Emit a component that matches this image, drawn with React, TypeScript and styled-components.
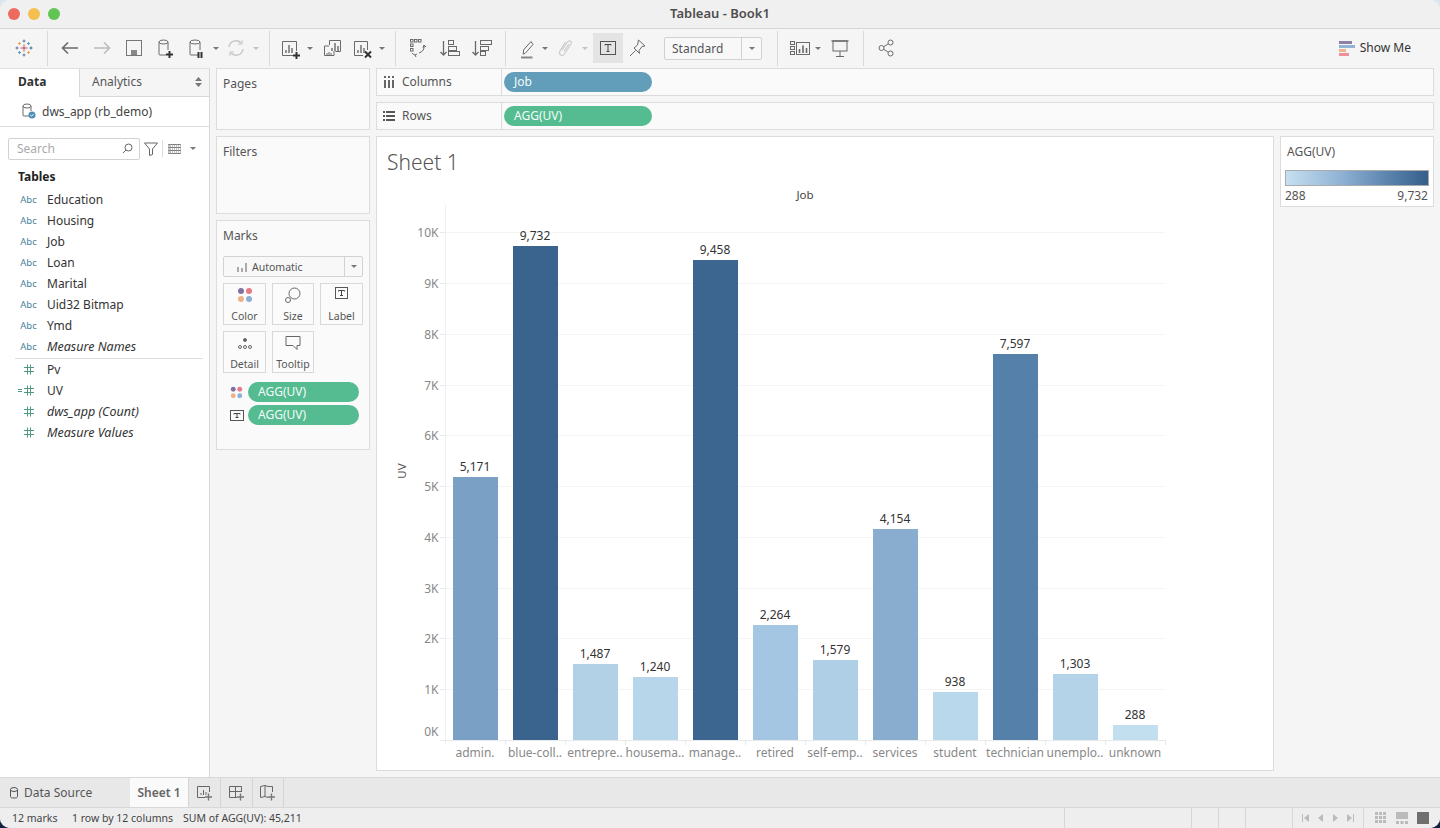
import React from 'react';
import styled, { createGlobalStyle } from 'styled-components';

const FONT = `"Noto Sans", "Open Sans", "Liberation Sans", sans-serif`;

const Global = createGlobalStyle`
  html, body { margin: 0; padding: 0; width: 1440px; height: 828px; overflow: hidden;
    background: linear-gradient(#dbe6ef 0 50%, #13233f 50% 100%); }
  * { box-sizing: border-box; }
`;

const Win = styled.div`
  width: 1440px; height: 828px; border-radius: 10px; overflow: hidden; background: #f5f5f5;
  display: grid; grid-template-rows: 29px 39px 1fr 31px 20px; font-family: ${FONT}; color: #444;
`;
const TitleBar = styled.div`
  position: relative; display: flex; align-items: center; justify-content: center; padding-bottom: 2px;
  background: #f0f0f0; border-bottom: 1px solid #d6d6d6; font-size: 13px; font-weight: 600; color: #4e4e4e;
`;
const Lights = styled.div`
  position: absolute; left: 8px; top: 8px; display: flex; gap: 8px;
`;
const Light = styled.span<{ $c: string }>`
  width: 12px; height: 12px; border-radius: 50%; background: ${p => p.$c};
`;
const Toolbar = styled.div`
  display: flex; align-items: center; background: #f5f5f5; padding: 0 29px 1px 0;
`;
const Slot = styled.div<{ $w: number; $active?: boolean }>`
  width: ${p => p.$w}px; height: 30px; flex: none; display: flex; align-items: center; justify-content: center;
  background: ${p => (p.$active ? '#e4e4e4' : 'transparent')};
`;
const Sep = styled.div`
  width: 1px; height: 35px; background: #d9d9d9; flex: none;
`;
const Caret = styled.span<{ $light?: boolean }>`
  width: 0; height: 0; border-left: 3px solid transparent; border-right: 3px solid transparent;
  border-top: 3px solid ${p => (p.$light ? '#c4c4c4' : '#777')};
`;
const Fit = styled.div<{ $w: number }>`
  width: ${p => p.$w}px; flex: none;
`;
const ViewSelect = styled.div`
  width: 98px; height: 23px; flex: none; display: grid; grid-template-columns: 1fr 20px; align-items: center;
  border: 1px solid #d2d2d2; border-radius: 2px; background: #f8f8f8; font-size: 12px; line-height: 19px; color: #555;
  padding-left: 7px;
`;
const SelectArrow = styled.div`
  height: 100%; border-left: 1px solid #d2d2d2; display: flex; align-items: center; justify-content: center;
`;
const ShowMe = styled.div`
  margin-left: auto; display: flex; align-items: center; gap: 5px; font-size: 12px; line-height: 14px; color: #333;
  padding-bottom: 1px;
`;
const Main = styled.div`
  display: grid; grid-template-columns: 210px 154px 1fr; column-gap: 6px; padding-right: 6px; min-height: 0;
`;
const DataPane = styled.div`
  background: #fff; border-right: 1px solid #d8d8d8; border-top: 1px solid #e0e0e0; display: flex; flex-direction: column;
`;
const Tabs = styled.div`
  height: 28px; display: grid; grid-template-columns: 79px 1fr; flex: none; font-size: 12px;
`;
const DataTab = styled.div`
  padding: 4px 0 0 18px; font-weight: 700; color: #333; background: #fff;
`;
const AnalyticsTab = styled.div`
  padding: 4px 7px 0 12px; display: flex; justify-content: space-between; align-items: flex-start; background: #f5f5f5;
  border-left: 1px solid #d8d8d8; border-bottom: 1px solid #d8d8d8; color: #555;
`;
const Source = styled.div`
  height: 30px; flex: none; display: flex; align-items: center; gap: 5px; padding: 0 0 1px 21px;
  font-size: 12px; color: #444; border-bottom: 1px solid #dedede;
`;
const SearchRow = styled.div`
  flex: none; height: 38px; padding: 5px 0 0 8px; display: flex; align-items: center;
`;
const SearchBox = styled.div`
  width: 132px; height: 22px; border: 1px solid #d2d2d2; border-radius: 2px; padding: 0 6px 0 8px;
  display: flex; align-items: center; justify-content: space-between; font-size: 12px; color: #aaa;
`;
const SmallSep = styled.div`
  width: 1px; height: 17px; background: #ddd; margin: 0 5px 0 4px;
`;
const TablesTitle = styled.div`
  font-size: 12px; font-weight: 700; color: #222; padding-left: 18px; height: 22px; line-height: 20px; margin-top: 2px;
`;
const FieldRow = styled.div<{ $italic?: boolean }>`
  height: 21px; display: grid; grid-template-columns: 47px 1fr; align-items: center;
  font-size: ${p => (p.$italic ? '12.5px' : '12px')};
  color: #333; font-style: ${p => (p.$italic ? 'italic' : 'normal')};
`;
const TypeAbc = styled.span`
  justify-self: center; font-size: 9.5px; color: #4a7f9b; font-style: normal; padding-left: 10px;
`;
const TypeNum = styled.span`
  justify-self: center; padding-left: 7px; display: flex;
`;
const FieldDivider = styled.div`
  height: 1px; background: #dedede; margin: 1px 6px 0 15px;
`;
const ShelfCol = styled.div`
  display: flex; flex-direction: column; gap: 6px;
`;
const Card = styled.div<{ $h: number }>`
  height: ${p => p.$h}px; flex: none; background: #fafafa; border: 1px solid #dcdcdc; padding: 6px 6px; font-size: 12px; color: #555;
`;
const MarkSelect = styled.div`
  margin-top: 12px; height: 21px; display: grid; grid-template-columns: 1fr 18px; align-items: center;
  border: 1px solid #d2d2d2; border-radius: 2px; background: #f8f8f8; font-size: 10.5px; color: #555;
`;
const MarkSelectLabel = styled.div`
  display: flex; align-items: center; gap: 4px; padding-left: 12px;
`;
const MarkGrid = styled.div`
  margin-top: 6px; display: grid; grid-template-columns: 43px 42px 43px; gap: 6px;
`;
const MarkBtn = styled.div`
  height: 42px; border: 1px solid #d8d8d8; background: #fbfbfb; display: flex; flex-direction: column;
  align-items: center; justify-content: space-between; padding: 3px 0 1px; font-size: 10.5px; color: #555; line-height: 14px;
`;
const MarkPills = styled.div`
  margin-top: 9px; display: flex; flex-direction: column; gap: 3px;
`;
const MarkPillRow = styled.div`
  display: grid; grid-template-columns: 25px 111px; align-items: center;
`;
const PillIcon = styled.div`
  padding-left: 7px; display: flex; align-items: center;
`;
const Pill = styled.div<{ $c: string; $w: number }>`
  width: ${p => p.$w}px; height: 20px; border-radius: 10px; background: ${p => p.$c}; color: #f4fbf8;
  font-size: 12px; line-height: 20px; padding-left: 10px;
`;
const RightCol = styled.div`
  display: flex; flex-direction: column; min-height: 0; gap: 6px; padding-bottom: 6px;
`;
const Shelf = styled.div`
  height: 28px; flex: none; display: grid; grid-template-columns: 125px 1fr; background: #fafafa; border: 1px solid #dcdcdc;
`;
const ShelfLabel = styled.div`
  display: flex; align-items: center; gap: 7px; padding: 0 0 1px 6px; font-size: 12px; color: #555; border-right: 1px solid #dcdcdc;
`;
const ShelfPills = styled.div`
  padding: 3px 0 0 2px;
`;
const ViewRow = styled.div`
  flex: 1; min-height: 0; display: grid; grid-template-columns: 898px 154px; column-gap: 6px; align-items: start;
`;
const Sheet = styled.div`
  height: 635px; background: #fff; border: 1px solid #dcdcdc;
`;
const SheetTitle = styled.div`
  height: 43px; padding: 11px 0 0 10px; font-size: 21px; line-height: 28px; font-weight: 300; color: #555;
`;
const ChartSvg = styled.svg`
  display: block; font-family: ${FONT};
`;
const Legend = styled.div`
  height: 71px; background: #fff; border: 1px solid #dcdcdc; padding: 6px 4px 0; font-size: 12px; color: #555;
`;
const LegendTitle = styled.div`
  padding-left: 2px; line-height: 17px;
`;
const Ramp = styled.div`
  margin-top: 10px; height: 16px; border: 1px solid #aaa;
  background: linear-gradient(90deg, #c6e0f1, #8db0d3 40%, #5a83ad 72%, #355e8a);
`;
const RampLabels = styled.div`
  display: flex; justify-content: space-between; padding: 1px 1px 0 0; line-height: 18px;
`;
const TabBar = styled.div`
  display: flex; background: #e8e8e8; border-top: 1px solid #d8d8d8; border-bottom: 1px solid #d8d8d8; font-size: 12px;
`;
const SourceTab = styled.div`
  width: 130px; display: flex; align-items: center; gap: 5px; padding-left: 9px; color: #555;
`;
const SheetTab = styled.div`
  width: 58px; background: #fafafa; display: flex; align-items: center; justify-content: center; font-weight: 600; color: #666;
`;
const AddTab = styled.div<{ $w: number }>`
  width: ${p => p.$w}px; display: flex; align-items: center; justify-content: center; border-left: 1px solid #d4d4d4;
  &:last-child { border-right: 1px solid #d4d4d4; }
`;
const Status = styled.div`
  display: flex; align-items: center; background: #eeeeee; font-size: 10.5px; color: #444;
`;
const StatusText = styled.span<{ $w: number }>`
  width: ${p => p.$w}px; flex: none; white-space: nowrap; padding-bottom: 1px;
`;
const StatusCell = styled.div<{ $w: number; $first?: boolean }>`
  width: ${p => p.$w}px; flex: none; height: 100%; border-left: 1px solid #d6d6d6; display: flex; align-items: center;
  justify-content: ${p => (p.$first ? 'flex-start' : 'space-around')}; padding: 0 6px;
`;

const GRAY = '#6a6a6a';
const Ico = ({ s = 24, h, children }: { s?: number; h?: number; children: React.ReactNode }) => (
  <svg width={s} height={h ?? s} viewBox={`0 0 ${s} ${h ?? s}`} fill="none" stroke={GRAY} strokeWidth={1} style={{ display: 'block', flex: 'none' }}>
    {children}
  </svg>
);
const Cyl = ({ x, y, w, h, c = GRAY }: { x: number; y: number; w: number; h: number; c?: string }) => (
  <g stroke={c} fill="none">
    <ellipse cx={x + w / 2} cy={y + 2} rx={w / 2} ry={2} />
    <path d={`M${x} ${y + 2}V${y + h - 1}q0 1 1 1h${w - 3}M${x + w} ${y + 2}v${h - 7}`} />
  </g>
);
const Plus = ({ x, y }: { x: number; y: number }) => (
  <path d={`M${x} ${y + 3.5}h7M${x + 3.5} ${y}v7`} stroke="#333" strokeWidth={2} />
);
const Logo = () => (
  <Ico>
    <g strokeWidth={1}>
      <path d="M12 8.500v7M8.500 12h7" stroke="#c8495b" />
      <path d="M12 3.500v3M10.500 5h3M12 17.500v3M10.500 19h3" stroke="#5a7fa8" />
      <path d="M3.500 12h3M5 10.500v3" stroke="#6f6fa0" />
      <path d="M17.500 12h3M19 10.500v3" stroke="#3f6f8f" />
      <path d="M7.500 6v3M6 7.500h3" stroke="#eea24f" />
      <path d="M16.500 6v3M15 7.500h3" stroke="#5a9bb5" />
      <path d="M7.500 15v3M6 16.500h3" stroke="#5a9bb5" />
      <path d="M16.500 15v3M15 16.500h3" stroke="#eea24f" />
    </g>
  </Ico>
);
const Back = () => <Ico><path d="M20 12H4.500M10 6.500L4.500 12l5.500 5.500" strokeWidth={1.6} /></Ico>;
const Forward = () => <Ico><path d="M4 12h15.500M14 6.500l5.500 5.500-5.500 5.500" strokeWidth={1.6} stroke="#bbb" /></Ico>;
const Save = () => <Ico><rect x={4.500} y={4.500} width={15} height={15} stroke="#777" /><rect x={9} y={14} width={6} height={5} fill="#888" stroke="none" /></Ico>;
const NewDs = () => <Ico><Cyl x={5} y={4} w={9} h={15} /><Plus x={12} y={15} /></Ico>;
const PauseDs = () => <Ico><Cyl x={6} y={4} w={10} h={15} /><path d="M14.500 16v6M17.500 16v6" stroke="#333" strokeWidth={2} /></Ico>;
const Refresh = () => <Ico><path d="M5 11a7 7 0 0 1 12-4M19 13a7 7 0 0 1-12 4" stroke="#c4c4c4" strokeWidth={1.4} /><path d="M18 4v4h-4M6 20v-4h4" stroke="#c4c4c4" /></Ico>;
const Bars = ({ x, y }: { x: number; y: number }) => <path d={`M${x} ${y + 5}v3M${x + 3} ${y}v8M${x + 6} ${y + 3}v5`} strokeWidth={1.4} />;
const NewSheet = () => <Ico><path d="M14 19.500H3.500v-14h14V15" /><Bars x={7} y={9} /><Plus x={14} y={16} /></Ico>;
const DupSheet = () => <Ico><path d="M9.500 9V4.500h11v11h-5" /><Bars x={12} y={7} /><path d="M9 10H4.500v9.500H14V15" /><path d="M7 17v2M9 16v3M11 17v2" /></Ico>;
const ClearSheet = () => <Ico><path d="M13 19.500H4.500v-14h13V14" /><Bars x={8} y={9} /><path d="M15 15.500l6 6M21 15.500l-6 6" stroke="#333" strokeWidth={2} /></Ico>;
const Swap = () => <Ico>
  <g fill="none"><rect x={5.500} y={3.500} width={2.500} height={2.500} /><rect x={9.500} y={3.500} width={2.500} height={2.500} /><rect x={13.500} y={3.500} width={2.500} height={2.500} /><rect x={5.500} y={8} width={2.500} height={2.500} /><rect x={5.500} y={12.500} width={2.500} height={2.500} /></g>
  <path d="M19 9q1 6-5 8M10 19q-2-.5-3-2M12 18l-2 1 1 2M18 12l1-3 2 2" /></Ico>;
const SortAsc = () => <Ico><path d="M5.500 5v14M2.500 16l3 3 3-3" strokeWidth={1.3} /><rect x={10.500} y={4.500} width={5} height={4} /><rect x={10.500} y={10.500} width={8} height={4} /><rect x={10.500} y={15.500} width={11} height={4} /></Ico>;
const SortDesc = () => <Ico><path d="M5.500 5v14M2.500 16l3 3 3-3" strokeWidth={1.3} /><rect x={10.500} y={4.500} width={11} height={4} /><rect x={10.500} y={10.500} width={8} height={4} /><rect x={10.500} y={15.500} width={5} height={4} /></Ico>;
const Highlight = () => <Ico><path d="M7.500 16l-.5 2 2-.5L17 8.500l-2-3L7.500 14z" /><path d="M5 21.500h11.500" stroke="#888" strokeWidth={2} /></Ico>;
const Clip = () => <Ico><path d="M8 14l5.500-8c1.500-2.500 5-.5 3.500 2l-6.500 10c-2 3-6.500.5-4.500-3L11.500 6M10 15.500l5-7.500" stroke="#ccc" strokeWidth={1.2} /></Ico>;
const TBox = ({ w = 16, h = 14 }: { w?: number; h?: number }) => (
  <svg width={w} height={h} viewBox={`0 0 ${w} ${h}`} style={{ display: 'block', flex: 'none' }} fill="none">
    <rect x={.5} y={.5} width={w - 1} height={h - 1} stroke="#555" />
    <path d={`M${w / 2 - 3} 4.500V3.500h6V4.500M${w / 2} 3.500V${h - 3.5}M${w / 2 - 1.5} ${h - 3.5}h3`} stroke="#444" />
  </svg>
);
const Pin = () => <Ico><path d="M13.500 4l6.500 6-3 .5-3 4 .5 3L9 12l3.500-3zM10.500 14.500L5 20" /></Ico>;
const Cards = () => <Ico>
  <rect x={2.500} y={5.500} width={4} height={3} /><rect x={2.500} y={10.500} width={4} height={3} /><rect x={2.500} y={15.500} width={4} height={3} />
  <rect x={8.500} y={6.500} width={13} height={12} /><path d="M11.500 13v4M15 9.500V17M18.500 12v5" strokeWidth={1.6} /></Ico>;
const Present = () => <Ico><path d="M3.500 5h17" strokeWidth={1.4} /><rect x={5} y={5} width={14} height={10} /><path d="M12 15v5M8 20.500h8" /></Ico>;
const Share = () => <Ico><circle cx={16.500} cy={6.500} r={2.500} /><circle cx={7.500} cy={12} r={2.500} /><circle cx={16.500} cy={17.500} r={2.500} /><path d="M9.700 10.700L14.300 7.800M9.700 13.300l4.600 2.900" /></Ico>;
const ShowMeIco = () => (
  <svg width={16} height={16} viewBox="0 0 16 16" style={{ display: 'block' }}>
    <rect x={0} y={1} width={13} height={3} fill="#8f7fa6" />
    <rect x={0} y={5} width={16} height={3} fill="#93b4d6" />
    <rect x={0} y={9} width={7} height={3} fill="#efb592" />
    <rect x={0} y={13} width={10} height={3} fill="#ee8f9a" />
  </svg>
);
const ColumnsIco = () => (
  <svg width={12} height={12} viewBox="0 0 12 12" style={{ display: 'block' }}>
    <path d="M1 4h2v8H1zM5 4h2v8H5zM9 4h2v8H9zM1 0h2v2H1zM5 0h2v2H5zM9 0h2v2H9z" fill="#666" />
  </svg>
);
const RowsIco = () => (
  <svg width={12} height={10} viewBox="0 0 12 10" style={{ display: 'block' }}>
    <path d="M0 0h2v2H0zM0 4h2v2H0zM0 8h2v2H0zM3 0h9v2H3zM3 4h9v2H3zM3 8h9v2H3z" fill="#555" />
  </svg>
);
const SourceIco = () => (
  <svg width={16} height={16} viewBox="0 0 16 16" style={{ display: 'block', flex: 'none' }} fill="none">
    <Cyl x={2} y={1} w={8} h={12} />
    <circle cx={11} cy={12} r={3.500} fill="#4d8fb5" />
    <path d="M9.300 12l1.200 1.200 2-2" stroke="#fff" />
  </svg>
);
const Magnifier = () => (
  <svg width={11} height={11} viewBox="0 0 11 11" fill="none" stroke="#666" style={{ display: 'block' }}>
    <circle cx={6.500} cy={4.500} r={3.500} /><path d="M4 7L1 10" />
  </svg>
);
const FunnelIco = () => (
  <svg width={14} height={14} viewBox="0 0 14 14" fill="none" stroke="#666" style={{ display: 'block', marginLeft: 4 }}>
    <path d="M.5 1h13L8.500 7v5.500l-3 1V7z" />
  </svg>
);
const ListIco = () => (
  <svg width={13} height={10} viewBox="0 0 13 10" style={{ display: 'block' }}>
    <path d="M0 0h13v1H0zM0 3h13v1H0zM0 6h13v1H0zM0 9h13v1H0z" fill="#777" />
    <path d="M0 0h3v10H0zM4 0h1v10H4zM6 0h1v10H6zM8 0h1v10H8zM10 0h1v10h-1zM12 0h1v10h-1z" fill="#999" opacity=".6" />
  </svg>
);
const UpDown = () => (
  <svg width={7} height={10} viewBox="0 0 7 10" style={{ display: 'block', marginTop: 4 }}>
    <path d="M3.500 0L7 4H0zM3.500 10L0 6h7z" fill="#777" />
  </svg>
);
const Hash = ({ eq }: { eq?: boolean }) => (
  <svg width={20} height={11} viewBox="0 0 20 11" fill="none" stroke="#4f9a80" style={{ display: 'block' }}>
    {eq && <path d="M1 4.500h4M1 6.500h4" />}
    <path d="M10.500 .5v10M13.500 .5v10M7 3.500h10M7 7.500h10" />
  </svg>
);
const MiniBars = () => (
  <svg width={12} height={10} viewBox="0 0 12 10" style={{ display: 'block' }}>
    <path d="M1 5h2v5H1zM5 6h2v4H5zM9 1h2v9H9z" fill="#aaa" />
  </svg>
);
const Dots = ({ size = 16, r = 3 }: { size?: number; r?: number }) => (
  <svg width={size} height={size} viewBox="0 0 16 16" style={{ display: 'block' }}>
    <circle cx={4} cy={4} r={r} fill="#84729c" /><circle cx={12} cy={4} r={r} fill="#e57b88" />
    <circle cx={4} cy={12} r={r} fill="#eeb18a" /><circle cx={12} cy={12} r={r} fill="#8dafd6" />
  </svg>
);
const SizeIco = () => (
  <svg width={16} height={16} viewBox="0 0 16 16" fill="none" stroke="#666" style={{ display: 'block' }}>
    <circle cx={9.500} cy={6.500} r={5.500} /><circle cx={3} cy={13} r={2.500} fill="#fbfbfb" />
  </svg>
);
const DetailIco = () => (
  <svg width={16} height={14} viewBox="0 0 16 14" fill="none" stroke="#666" style={{ display: 'block', marginTop: 2 }}>
    <circle cx={8} cy={3} r={1.500} fill="#666" /><circle cx={3} cy={10} r={1.500} /><circle cx={8} cy={10} r={1.500} /><circle cx={13} cy={10} r={1.500} />
  </svg>
);
const TipIco = () => (
  <svg width={16} height={16} viewBox="0 0 16 16" fill="none" stroke="#666" style={{ display: 'block' }}>
    <path d="M1 1.500h14v9h-3v4l-4-4H1z" />
  </svg>
);
const TabDs = () => (
  <svg width={10} height={12} viewBox="0 0 10 12" fill="none" stroke="#555" style={{ display: 'block' }}>
    <ellipse cx={5} cy={2.500} rx={3.500} ry={2} /><path d="M1.500 2.500v7c0 1 1 1.500 3.500 1.500s3.500-.5 3.500-1.500v-7" />
  </svg>
);
const TabPlus = ({ kind }: { kind: 'sheet' | 'dash' | 'story' }) => (
  <svg width={16} height={16} viewBox="0 0 16 16" fill="none" stroke="#666" style={{ display: 'block' }}>
    {kind === 'sheet' && <><path d="M8 12.500H.500v-11h12V7" /><path d="M4 8v2M6.500 5v5M9 7v3" /></>}
    {kind === 'dash' && <path d="M8 12.500H.500v-11h12V7M.500 6.500h12M6.500 1.500v11" />}
    {kind === 'story' && <path d="M8 12.500l-3-1-4.500 1v-11L5 .500l3 1h4.500V7M5 .500v11" />}
    <path d="M8 12h7M11.500 8.500v7" strokeWidth={1.4} stroke="#777" />
  </svg>
);
const NavIco = ({ k }: { k: 'first' | 'prev' | 'next' | 'last' }) => (
  <svg width={8} height={8} viewBox="0 0 8 8" style={{ display: 'block' }}>
    {k === 'first' && <path d="M0 0h1v8H0zM7 0v8L2 4z" fill="#bbb" />}
    {k === 'prev' && <path d="M6 0v8L1 4z" fill="#bbb" />}
    {k === 'next' && <path d="M2 0v8l5-4z" fill="#bbb" />}
    {k === 'last' && <path d="M7 0h1v8H7zM1 0v8l5-4z" fill="#bbb" />}
  </svg>
);
const ViewIco = ({ k }: { k: 'grid' | 'mix' | 'full' }) => (
  <svg width={12} height={12} viewBox="0 0 12 12" style={{ display: 'block' }}>
    {k === 'grid' && <path d="M0 0h3v3H0zM4 0h3v3H4zM8 0h3v3H8zM0 4h3v3H0zM4 4h3v3H4zM8 4h3v3H8zM0 8h3v3H0zM4 8h3v3H4zM8 8h3v3H8z" fill="#bbb" />}
    {k === 'mix' && <path d="M0 0h12v7H0zM0 9h3v3H0zM4.500 9h3v3h-3zM9 9h3v3H9z" fill="#bbb" />}
    {k === 'full' && <path d="M0 0h12v12H0z" fill="#6f6f6f" />}
  </svg>
);

const DATA = [
  { l: 'admin.', v: 5171, c: '#7aa0c5' },
  { l: 'blue-coll..', v: 9732, c: '#3a638e' },
  { l: 'entrepre..', v: 1487, c: '#b2d1e7' },
  { l: 'housema..', v: 1240, c: '#b7d6ea' },
  { l: 'manage..', v: 9458, c: '#3c6590' },
  { l: 'retired', v: 2264, c: '#a5c6e2' },
  { l: 'self-emp..', v: 1579, c: '#afcfe6' },
  { l: 'services', v: 4154, c: '#88adcf' },
  { l: 'student', v: 938, c: '#bad8ec' },
  { l: 'technician', v: 7597, c: '#5580aa' },
  { l: 'unemplo..', v: 1303, c: '#b5d3e8' },
  { l: 'unknown', v: 288, c: '#c2dff0' },
];
const Y0 = 740;
const K = 50.76;
const BAR_K = 50.8;

const Chart = () => (
  <ChartSvg width={896} height={590} viewBox="377 180 896 590">
    <text x={805} y={199} fontSize={11.5} fill="#444" textAnchor="middle">Job</text>
    <text transform="translate(406 471) rotate(-90)" fontSize={11.5} fill="#555" textAnchor="middle">UV</text>
    {Array.from({ length: 11 }, (_, i) => {
      const y = Math.round(Y0 - i * K) + 0.5;
      return (
        <g key={i}>
          {i > 0 && <line x1={445} x2={1165} y1={y} y2={y} stroke="#f4f4f4" />}
          <line x1={440} x2={445} y1={y} y2={y} stroke="#e9e9e9" />
          <text x={438.500} y={Math.round(Y0 - i * K) + (i === 0 ? -4 : 5)} fontSize={12} fill="#888" textAnchor="end">{i}K</text>
        </g>
      );
    })}
    <line x1={445.500} x2={445.500} y1={205} y2={745} stroke="#f0f0f0" />
    <line x1={440} x2={1165} y1={740.500} y2={740.500} stroke="#e9e9e9" />
    {DATA.map((d, i) => {
      const x = 453 + i * 60;
      const h = Math.round(d.v * BAR_K / 1000);
      return (
        <g key={d.l}>
          <line x1={x + 52.500} x2={x + 52.500} y1={740} y2={745} stroke="#e9e9e9" />
          <rect x={x} y={Y0 - h} width={45} height={h} fill={d.c} />
          <text x={x + 22} y={Y0 - h - 6} fontSize={12} fill="#333" textAnchor="middle">{d.v.toLocaleString('en-US')}</text>
          <text x={x + 22} y={757} fontSize={12} fill="#888" textAnchor="middle">{d.l}</text>
        </g>
      );
    })}
  </ChartSvg>
);

const DIMS = ['Education', 'Housing', 'Job', 'Loan', 'Marital', 'Uid32 Bitmap', 'Ymd'];
const Spacer = ({ w }: { w: number }) => <Fit $w={w} />;

export default function App() {
  return (
    <>
      <Global />
      <Win>
        <TitleBar>
          <Lights>
            <Light $c="#ed6a5e" /><Light $c="#f5bf4f" /><Light $c="#61c554" />
          </Lights>
          Tableau - Book1
        </TitleBar>
        <Toolbar>
          <Slot $w={47}><Logo /></Slot><Sep /><Spacer w={6} />
          <Slot $w={32}><Back /></Slot>
          <Slot $w={32}><Forward /></Slot>
          <Slot $w={32}><Save /></Slot>
          <Slot $w={32}><NewDs /></Slot>
          <Slot $w={28}><PauseDs /></Slot>
          <Slot $w={12}><Caret /></Slot>
          <Slot $w={28}><Refresh /></Slot>
          <Slot $w={12}><Caret $light /></Slot>
          <Spacer w={7} /><Sep /><Spacer w={5} />
          <Slot $w={32}><NewSheet /></Slot>
          <Slot $w={6}><Caret /></Slot>
          <Spacer w={3} />
          <Slot $w={32}><DupSheet /></Slot>
          <Slot $w={28}><ClearSheet /></Slot>
          <Slot $w={12}><Caret /></Slot>
          <Spacer w={7} /><Sep /><Spacer w={5} />
          <Slot $w={32}><Swap /></Slot>
          <Spacer w={1} />
          <Slot $w={32}><SortAsc /></Slot>
          <Slot $w={32}><SortDesc /></Slot>
          <Spacer w={7} /><Sep /><Spacer w={8} />
          <Slot $w={28}><Highlight /></Slot>
          <Slot $w={6}><Caret /></Slot>
          <Spacer w={4} />
          <Slot $w={28}><Clip /></Slot>
          <Slot $w={10}><Caret $light /></Slot>
          <Spacer w={3} />
          <Slot $w={30} $active><TBox /></Slot>
          <Slot $w={28}><Pin /></Slot>
          <Spacer w={13} />
          <ViewSelect>Standard<SelectArrow><Caret /></SelectArrow></ViewSelect>
          <Spacer w={15} /><Sep /><Spacer w={7} />
          <Slot $w={30}><Cards /></Slot>
          <Slot $w={6}><Caret /></Slot>
          <Spacer w={5} />
          <Slot $w={28}><Present /></Slot>
          <Spacer w={9} /><Sep /><Spacer w={6} />
          <Slot $w={32}><Share /></Slot>
          <ShowMe><ShowMeIco />Show Me</ShowMe>
        </Toolbar>
        <Main>
          <DataPane>
            <Tabs>
              <DataTab>Data</DataTab>
              <AnalyticsTab>Analytics<UpDown /></AnalyticsTab>
            </Tabs>
            <Source><SourceIco />dws_app (rb_demo)</Source>
            <SearchRow>
              <SearchBox>Search<Magnifier /></SearchBox>
              <FunnelIco />
              <SmallSep />
              <ListIco />
              <Slot $w={24}><Caret /></Slot>
            </SearchRow>
            <TablesTitle>Tables</TablesTitle>
            {DIMS.map(d => (
              <FieldRow key={d}><TypeAbc>Abc</TypeAbc>{d}</FieldRow>
            ))}
            <FieldRow $italic><TypeAbc>Abc</TypeAbc>Measure Names</FieldRow>
            <FieldDivider />
            <FieldRow><TypeNum><Hash /></TypeNum>Pv</FieldRow>
            <FieldRow><TypeNum><Hash eq /></TypeNum>UV</FieldRow>
            <FieldRow $italic><TypeNum><Hash /></TypeNum>dws_app (Count)</FieldRow>
            <FieldRow $italic><TypeNum><Hash /></TypeNum>Measure Values</FieldRow>
          </DataPane>
          <ShelfCol>
            <Card $h={62}>Pages</Card>
            <Card $h={78}>Filters</Card>
            <Card $h={230}>
              Marks
              <MarkSelect>
                <MarkSelectLabel><MiniBars />Automatic</MarkSelectLabel>
                <SelectArrow><Caret /></SelectArrow>
              </MarkSelect>
              <MarkGrid>
                <MarkBtn><Dots />Color</MarkBtn>
                <MarkBtn><SizeIco />Size</MarkBtn>
                <MarkBtn><TBox w={13} h={12} />Label</MarkBtn>
                <MarkBtn><DetailIco />Detail</MarkBtn>
                <MarkBtn><TipIco />Tooltip</MarkBtn>
              </MarkGrid>
              <MarkPills>
                <MarkPillRow><PillIcon><Dots size={13} /></PillIcon><Pill $c="#55bb91" $w={111}>AGG(UV)</Pill></MarkPillRow>
                <MarkPillRow><PillIcon><TBox w={14} h={11} /></PillIcon><Pill $c="#55bb91" $w={111}>AGG(UV)</Pill></MarkPillRow>
              </MarkPills>
            </Card>
          </ShelfCol>
          <RightCol>
            <Shelf>
              <ShelfLabel><ColumnsIco />Columns</ShelfLabel>
              <ShelfPills><Pill $c="#629eba" $w={148}>Job</Pill></ShelfPills>
            </Shelf>
            <Shelf>
              <ShelfLabel><RowsIco />Rows</ShelfLabel>
              <ShelfPills><Pill $c="#55bb91" $w={148}>AGG(UV)</Pill></ShelfPills>
            </Shelf>
            <ViewRow>
              <Sheet>
                <SheetTitle>Sheet 1</SheetTitle>
                <Chart />
              </Sheet>
              <Legend>
                <LegendTitle>AGG(UV)</LegendTitle>
                <Ramp />
                <RampLabels><span>288</span><span>9,732</span></RampLabels>
              </Legend>
            </ViewRow>
          </RightCol>
        </Main>
        <TabBar>
          <SourceTab><TabDs />Data Source</SourceTab>
          <SheetTab>Sheet 1</SheetTab>
          <AddTab $w={32}><TabPlus kind="sheet" /></AddTab>
          <AddTab $w={32}><TabPlus kind="dash" /></AddTab>
          <AddTab $w={32}><TabPlus kind="story" /></AddTab>
        </TabBar>
        <Status>
          <Spacer w={12} />
          <StatusText $w={60}>12 marks</StatusText>
          <StatusText $w={111}>1 row by 12 columns</StatusText>
          <StatusText $w={881}>SUM of AGG(UV): 45,211</StatusText>
          <StatusCell $w={127} $first />
          <StatusCell $w={27} $first />
          <StatusCell $w={27} $first />
          <StatusCell $w={47} $first />
          <StatusCell $w={71}>
            <NavIco k="first" /><NavIco k="prev" /><NavIco k="next" /><NavIco k="last" />
          </StatusCell>
          <StatusCell $w={77}>
            <ViewIco k="grid" /><ViewIco k="mix" /><ViewIco k="full" />
          </StatusCell>
        </Status>
      </Win>
    </>
  );
}
